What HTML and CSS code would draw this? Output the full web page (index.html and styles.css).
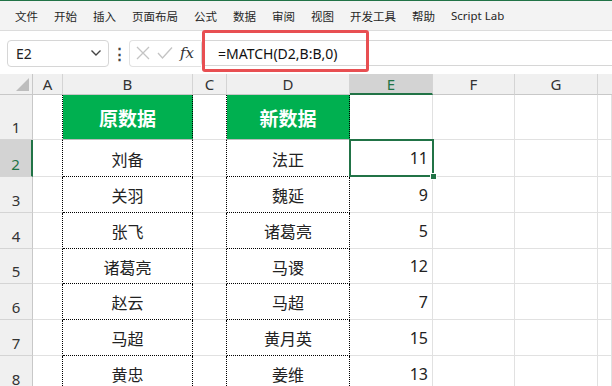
FILE: index.html
```html
<!DOCTYPE html>
<html lang="zh-CN">
<head>
    <meta charset="UTF-8">
    <title>Excel MATCH</title>
    <link rel="stylesheet" href="styles.css">
</head>
<body>
    <div class="menubar">
        <span>文件</span>
        <span>开始</span>
        <span>插入</span>
        <span>页面布局</span>
        <span>公式</span>
        <span>数据</span>
        <span>审阅</span>
        <span>视图</span>
        <span>开发工具</span>
        <span>帮助</span>
        <span>Script Lab</span>
    </div>

    <div class="formula-bar">
        <div class="name-box">
            <span>E2</span>
            <svg width="12" height="8" viewBox="0 0 12 8"><path d="M1.5 1.5 L6 6 L10.5 1.5" fill="none" stroke="#444" stroke-width="1.4"/></svg>
        </div>
        <div class="dots">⋮</div>
        <div class="fx-box">
            <svg width="14" height="14" viewBox="0 0 14 14"><path d="M1 1 L13 13 M13 1 L1 13" stroke="#c4c4c4" stroke-width="1.3"/></svg>
            <svg width="16" height="14" viewBox="0 0 16 14"><path d="M1 7 L5.5 12 L15 1.5" fill="none" stroke="#c4c4c4" stroke-width="1.3"/></svg>
            <span class="fx">fx</span>
        </div>
        <div class="formula-input">
            <div class="formula-text">=MATCH(D2,B:B,0)</div>
        </div>
        <div class="annotation"></div>
    </div>

    <div class="sheet">
        <div class="corner"><i></i></div>
        <div class="col-head">A</div>
        <div class="col-head">B</div>
        <div class="col-head">C</div>
        <div class="col-head">D</div>
        <div class="col-head active">E</div>
        <div class="col-head">F</div>
        <div class="col-head">G</div>
        <div class="col-head last"></div>

        <div class="row-head">1</div>
        <div class="cell dot-r"></div>
        <div class="cell title dot-r">原数据</div>
        <div class="cell dot-r"></div>
        <div class="cell title dot-r">新数据</div>
        <div class="cell"></div>
        <div class="cell"></div>
        <div class="cell"></div>
        <div class="cell"></div>

        <div class="row-head active">2</div>
        <div class="cell dot-r"></div>
        <div class="cell name dot-r dot-b">刘备</div>
        <div class="cell dot-r"></div>
        <div class="cell name dot-r dot-b">法正</div>
        <div class="cell num">11</div>
        <div class="cell"></div>
        <div class="cell"></div>
        <div class="cell"></div>

        <div class="row-head">3</div>
        <div class="cell dot-r"></div>
        <div class="cell name dot-r dot-b">关羽</div>
        <div class="cell dot-r"></div>
        <div class="cell name dot-r dot-b">魏延</div>
        <div class="cell num">9</div>
        <div class="cell"></div>
        <div class="cell"></div>
        <div class="cell"></div>

        <div class="row-head">4</div>
        <div class="cell dot-r"></div>
        <div class="cell name dot-r dot-b">张飞</div>
        <div class="cell dot-r"></div>
        <div class="cell name dot-r dot-b">诸葛亮</div>
        <div class="cell num">5</div>
        <div class="cell"></div>
        <div class="cell"></div>
        <div class="cell"></div>

        <div class="row-head">5</div>
        <div class="cell dot-r"></div>
        <div class="cell name dot-r dot-b">诸葛亮</div>
        <div class="cell dot-r"></div>
        <div class="cell name dot-r dot-b">马谡</div>
        <div class="cell num">12</div>
        <div class="cell"></div>
        <div class="cell"></div>
        <div class="cell"></div>

        <div class="row-head">6</div>
        <div class="cell dot-r"></div>
        <div class="cell name dot-r dot-b">赵云</div>
        <div class="cell dot-r"></div>
        <div class="cell name dot-r dot-b">马超</div>
        <div class="cell num">7</div>
        <div class="cell"></div>
        <div class="cell"></div>
        <div class="cell"></div>

        <div class="row-head">7</div>
        <div class="cell dot-r"></div>
        <div class="cell name dot-r dot-b">马超</div>
        <div class="cell dot-r"></div>
        <div class="cell name dot-r dot-b">黄月英</div>
        <div class="cell num">15</div>
        <div class="cell"></div>
        <div class="cell"></div>
        <div class="cell"></div>

        <div class="row-head">8</div>
        <div class="cell dot-r"></div>
        <div class="cell name dot-r dot-b">黄忠</div>
        <div class="cell dot-r"></div>
        <div class="cell name dot-r dot-b">姜维</div>
        <div class="cell num">13</div>
        <div class="cell"></div>
        <div class="cell"></div>
        <div class="cell"></div>

        <!-- active cell E2 -->
        <div class="selection"><i></i></div>
    </div>
</body>
</html>
```

FILE: styles.css
```css
:root {
    --excel-green: #217346;
    --fill-green: #00b050;
    --grid: #e1e1e1;
    --head-bg: #f0f0f0;
    --head-line: #c8c8c8;
    --note-red: #e84f52;
}

* {
    margin: 0;
    padding: 0;
    box-sizing: border-box;
}

body {
    width: 612px;
    height: 386px;
    overflow: hidden;
    background: #fff;
    font-family: "Noto Sans", "Noto Sans CJK SC", sans-serif;
    color: #222;
}

.menubar {
    height: 31px;
    background: #f3f3f3;
    border-top: 1px solid var(--excel-green);
    border-bottom: 1px solid #dcdcdc;
    display: flex;
    align-items: center;
    gap: 16px;
    padding-left: 15px;
    font-family: "Noto Sans", "Noto Sans CJK SC", sans-serif;
    font-size: 11.5px;
    color: #262626;
    white-space: nowrap;
}

.menubar span {
    flex-shrink: 0;
}

.formula-bar {
    position: relative;
    height: 43px;
    background: #fff;
    display: flex;
    align-items: center;
    padding-left: 7px;
}

.name-box {
    width: 102px;
    height: 27px;
    border: 1px solid #d6d6d6;
    border-radius: 4px;
    display: flex;
    align-items: center;
    justify-content: space-between;
    padding: 0 6px 0 8px;
    font-size: 14px;
    color: #222;
    margin-top: 1px;
}

.dots {
    width: 20px;
    text-align: center;
    font-size: 15px;
    font-weight: bold;
    color: #444;
}

.fx-box {
    width: 72px;
    height: 27px;
    border: 1px solid #e2e2e2;
    border-right: none;
    border-radius: 4px 0 0 4px;
    display: flex;
    align-items: center;
    gap: 7px;
    padding-left: 6px;
    margin-top: 1px;
}

.fx {
    font-family: "DejaVu Serif", "Liberation Serif", serif;
    font-style: italic;
    font-size: 15px;
    color: #333;
}

.formula-input {
    flex: 1;
    height: 26px;
    border: 1px solid #d6d6d6;
    border-right: none;
    border-radius: 4px 0 0 4px;
    display: flex;
    align-items: center;
    margin-top: 1px;
}

.formula-text {
    padding-left: 16px;
    font-family: "Noto Sans", sans-serif;
    font-size: 14px;
    color: #111;
}

.annotation {
    position: absolute;
    left: 202px;
    top: -1px;
    width: 167px;
    height: 42px;
    border: 3px solid var(--note-red);
    border-radius: 3px;
}

.sheet {
    position: relative;
    display: grid;
    grid-template-columns: 33px 30px 130px 34px 123px 83px 82px 83px 14px;
    grid-template-rows: 21px 45px 37px 36px 36px 35px 36px 36px 36px;
}

.corner {
    background: var(--head-bg);
    border-right: 1px solid var(--head-line);
    border-bottom: 1px solid var(--head-line);
    position: relative;
}

.corner i {
    position: absolute;
    right: 3px;
    bottom: 3px;
    width: 13px;
    height: 13px;
    background: #bdbdbd;
    clip-path: polygon(100% 0, 100% 100%, 0 100%);
}

.col-head {
    background: var(--head-bg);
    border-right: 1px solid #d4d4d4;
    border-bottom: 1px solid var(--head-line);
    display: flex;
    align-items: center;
    justify-content: center;
    font-size: 15px;
    color: #333;
}

.col-head.active {
    background: #d3d3d3;
    border-bottom: 2px solid var(--excel-green);
    color: var(--excel-green);
}

.col-head.last {
    border-right: none;
}

.row-head {
    background: var(--head-bg);
    border-right: 1px solid var(--head-line);
    border-bottom: 1px solid #d4d4d4;
    display: flex;
    align-items: flex-end;
    justify-content: center;
    padding-bottom: 2px;
    font-size: 15px;
    color: #333;
}

.row-head.active {
    background: #d3d3d3;
    border-right: 2px solid var(--excel-green);
    color: var(--excel-green);
}

.cell {
    border-right: 1px solid var(--grid);
    border-bottom: 1px solid var(--grid);
    display: flex;
    align-items: center;
    font-family: "Noto Sans CJK SC", sans-serif;
    font-size: 16px;
    color: #222;
}

.cell.dot-r {
    border-right: 1px dotted #000;
}

.cell.dot-b {
    border-bottom: 1px dotted #000;
}

.cell.title {
    background: var(--fill-green);
    justify-content: center;
    color: #fff;
    font-weight: bold;
    font-size: 19px;
    border-bottom: 1px solid #bcbcbc;
}

.cell.name {
    justify-content: center;
    padding-top: 1px;
}

.cell.num {
    justify-content: flex-end;
    padding-right: 4px;
    font-family: "Noto Sans", sans-serif;
}

.selection {
    position: absolute;
    left: 349px;
    top: 65px;
    width: 85px;
    height: 38px;
    border: 2px solid var(--excel-green);
}

.selection i {
    position: absolute;
    right: -5px;
    bottom: -5px;
    width: 7px;
    height: 7px;
    background: var(--excel-green);
    border: 1px solid #fff;
}
```
